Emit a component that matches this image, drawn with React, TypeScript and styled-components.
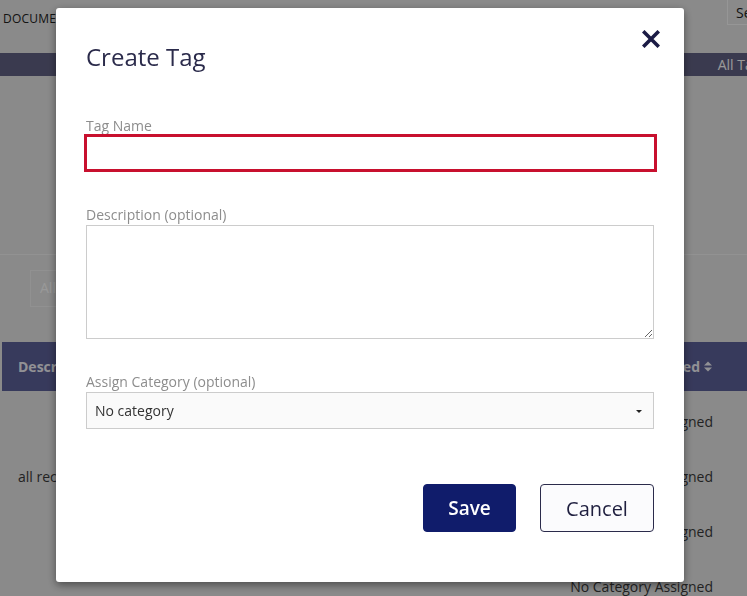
import React from "react";
import styled, { createGlobalStyle } from "styled-components";

const GlobalStyle = createGlobalStyle`
  html, body { margin: 0; padding: 0; }
  body {
    font-family: "Open Sans", "Noto Sans", sans-serif;
    background: #e6e6e6;
    overflow: hidden;
  }
  * { box-sizing: border-box; }
`;

const Page = styled.div`
  width: 747px;
  height: 596px;
  overflow: hidden;
  background: #e6e6e6;
  color: #444;
  display: flex;
  flex-direction: column;
  & > * { flex-shrink: 0; }
`;

const TopBar = styled.div`
  height: 53px;
  display: flex;
  justify-content: space-between;
  align-items: flex-start;
  padding-left: 3px;
`;

const Brand = styled.div`
  font-size: 12px;
  margin-top: 10px;
  color: #222;
  letter-spacing: 0.2px;
`;

const SearchBox = styled.div`
  width: 60px;
  height: 26px;
  margin-top: -1px;
  margin-right: -40px;
  border: 1px solid #fafafa;
  padding: 3px 0 0 8px;
  font-size: 14px;
  color: #222;
  white-space: nowrap;
  overflow: hidden;
`;

const NavBar = styled.div`
  height: 23px;
  background: #626284;
  display: flex;
  justify-content: flex-end;
  align-items: center;
  font-size: 14px;
  color: #ffffff;
  white-space: nowrap;
  overflow: hidden;
`;

const NavItem = styled.span`
  margin-right: -20px;
`;

const Panel = styled.div`
  height: 179px;
  border-bottom: 1px solid #f4f4f4;
`;

const FilterRow = styled.div`
  padding: 15px 0 0 30px;
  height: 87px;
`;

const FilterBox = styled.div`
  width: 90px;
  height: 37px;
  border: 1px solid #f2f2f2;
  padding: 7px 0 0 9px;
  font-size: 14px;
  color: #ffffff;
`;

const Table = styled.div`
  margin-left: 2px;
  display: flex;
  flex-direction: column;
`;

const HeaderRow = styled.div`
  height: 49px;
  flex-shrink: 0;
  background: #5d6199;
  display: flex;
  align-items: center;
  justify-content: space-between;
  padding: 0 35px 0 16px;
  font-size: 14px;
  font-weight: 700;
  color: #f2f2f8;
`;

const SortHead = styled.span`
  display: inline-flex;
  align-items: center;
  gap: 4px;
`;

const Row = styled.div`
  height: 55px;
  flex-shrink: 0;
  display: flex;
  align-items: center;
  justify-content: space-between;
  padding: 5px 34px 0 16px;
  font-size: 14px;
  color: #3a3a3a;
`;

const Overlay = styled.div`
  position: fixed;
  inset: 0;
  background: rgba(0, 0, 0, 0.4);
  display: flex;
  align-items: flex-start;
  padding: 8px 0 0 56px;
`;

const Modal = styled.div`
  width: 628px;
  height: 574px;
  background: #ffffff;
  border-radius: 3px;
  box-shadow: 0 3px 9px rgba(0, 0, 0, 0.45);
  padding: 32px 30px 0 30px;
  display: flex;
  flex-direction: column;
`;

const ModalHeader = styled.div`
  display: flex;
  justify-content: space-between;
  align-items: flex-start;
  height: 43px;
  margin-bottom: 33px;
`;

const Title = styled.h2`
  margin: 0;
  font-size: 24px;
  line-height: 34px;
  font-weight: 400;
  color: #2b2b4b;
`;

const CloseButton = styled.button`
  border: none;
  background: transparent;
  padding: 0;
  margin: -10px -6px 0 0;
  width: 18px;
  height: 18px;
  cursor: pointer;
  display: flex;
`;

const Field = styled.div<{ $gap: number }>`
  display: flex;
  flex-direction: column;
  margin-bottom: ${(p) => p.$gap}px;
`;

const Label = styled.label`
  font-size: 14px;
  line-height: 19px;
  color: #8d8d8d;
`;

const TextInput = styled.input`
  height: 38px;
  margin: -1px -3px 0 -2px;
  border: 3px solid #c8102e;
  background: #fff;
  outline: none;
  font-family: inherit;
  font-size: 14px;
  padding: 0 8px;
`;

const TextArea = styled.textarea`
  height: 114px;
  border: 1px solid #cccccc;
  resize: vertical;
  font-family: inherit;
  font-size: 14px;
  padding: 6px 8px;
  outline: none;
  margin-top: 1px;
`;

const SelectBox = styled.div`
  height: 37px;
  margin-top: 1px;
  border: 1px solid #cccccc;
  background: #fafafa;
  display: flex;
  align-items: center;
  justify-content: space-between;
  padding: 0 11px 0 8px;
  font-size: 14px;
  color: #333333;
`;

const Caret = styled.span`
  width: 0;
  height: 0;
  border-left: 3px solid transparent;
  border-right: 3px solid transparent;
  border-top: 3px solid #222;
  margin-top: 1px;
`;

const Actions = styled.div`
  display: flex;
  justify-content: flex-end;
  gap: 24px;
  margin-top: 18px;
`;

const BaseButton = styled.button`
  height: 48px;
  border-radius: 4px;
  font-family: inherit;
  cursor: pointer;
  padding: 0;
`;

const SaveButton = styled(BaseButton)`
  width: 93px;
  background: #101c6b;
  border: 1px solid #101c6b;
  color: #ffffff;
  font-size: 19px;
  font-weight: 600;
`;

const CancelButton = styled(BaseButton)`
  width: 114px;
  background: #fbfbfd;
  border: 1px solid #2b2b4b;
  color: #1f1f3f;
  font-size: 20px;
  font-weight: 400;
`;

const rows = ["", "all records", "", ""];

function SortIcon() {
  return (
    <svg width="8" height="11" viewBox="0 0 8 11">
      <path d="M0 4.5 L4 0.5 L8 4.5 Z M0 6.5 L4 10.5 L8 6.5 Z" fill="#f2f2f8" />
    </svg>
  );
}

export default function App() {
  return (
    <>
      <GlobalStyle />
      <Page>
        <TopBar>
          <Brand>DOCUMENTS</Brand>
          <SearchBox>Search</SearchBox>
        </TopBar>
        <NavBar>
          <NavItem>All Tags</NavItem>
        </NavBar>
        <Panel />
        <FilterRow>
          <FilterBox>All</FilterBox>
        </FilterRow>
        <Table>
          <HeaderRow>
            <span>Description</span>
            <SortHead>
              Category Assigned
              <SortIcon />
            </SortHead>
          </HeaderRow>
          {rows.map((d, i) => (
            <Row key={i}>
              <span>{d}</span>
              <span>No Category Assigned</span>
            </Row>
          ))}
        </Table>
      </Page>
      <Overlay>
        <Modal>
          <ModalHeader>
            <Title>Create Tag</Title>
            <CloseButton aria-label="Close">
              <svg width="18" height="18" viewBox="0 0 18 18">
                <path
                  d="M2.5 2.5 L15.5 15.5 M15.5 2.5 L2.5 15.5"
                  stroke="#1b1b45"
                  strokeWidth="3.6"
                  strokeLinecap="square"
                />
              </svg>
            </CloseButton>
          </ModalHeader>
          <Field $gap={33}>
            <Label>Tag Name</Label>
            <TextInput type="text" />
          </Field>
          <Field $gap={33}>
            <Label>Description (optional)</Label>
            <TextArea />
          </Field>
          <Field $gap={37}>
            <Label>Assign Category (optional)</Label>
            <SelectBox>
              <span>No category</span>
              <Caret />
            </SelectBox>
          </Field>
          <Actions>
            <SaveButton>Save</SaveButton>
            <CancelButton>Cancel</CancelButton>
          </Actions>
        </Modal>
      </Overlay>
    </>
  );
}
